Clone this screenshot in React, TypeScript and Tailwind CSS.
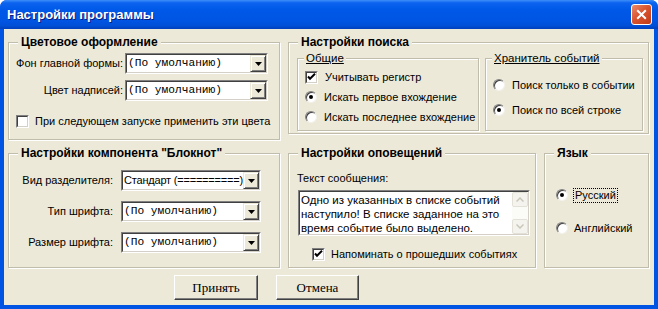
import React from 'react';

// ── small classic win32 controls ─────────────────────────

function GroupBox({
  title,
  className,
  sub = false,
  children,
}: {
  title: string;
  className: string;
  sub?: boolean;
  children?: React.ReactNode;
}) {
  return (
    <fieldset
      className={`border border-[#C0BDAD] shadow-[inset_1px_1px_0_#fff,1px_1px_0_#fff] ${className}`}
    >
      <legend
        className={
          sub
            ? 'ml-[6px] px-[2px] leading-[14px] text-[11.5px] underline bg-[#ECE9D8]'
            : 'ml-[9px] px-[3px] leading-[14px] text-[12px] font-bold bg-[#ECE9D8]'
        }
      >
        {title}
      </legend>
      {children}
    </fieldset>
  );
}

function DropArrow() {
  return (
    <div className="w-[16px] h-full shrink-0 flex items-center justify-center bg-[#ECE9D8] border border-t-[#ECE9D8] border-l-[#ECE9D8] border-r-[#404040] border-b-[#404040] shadow-[inset_1px_1px_0_#fff,inset_-1px_-1px_0_#808080]">
      <svg width="7" height="4" viewBox="0 0 7 4">
        <path d="M0 0h7L3.5 4z" fill="#000" />
      </svg>
    </div>
  );
}

function Combo({ value, mono = true, className }: { value: string; mono?: boolean; className: string }) {
  return (
    <div
      className={`h-[21px] border border-t-[#808080] border-l-[#808080] border-r-white border-b-white ${className}`}
    >
      <div className="h-full flex bg-white border border-t-[#404040] border-l-[#404040] border-r-[#D4D0C8] border-b-[#D4D0C8]">
        <span
          className={
            mono
              ? "flex-1 min-w-0 overflow-hidden pl-[1px] leading-[17px] whitespace-pre font-['Liberation_Mono',monospace] text-[11.2px]"
              : 'flex-1 min-w-0 overflow-hidden pl-[1px] leading-[17px] whitespace-pre text-[11px] tracking-[-0.2px]'
          }
        >
          {value}
        </span>
        <DropArrow />
      </div>
    </div>
  );
}

function CheckBox({ checked }: { checked: boolean }) {
  return (
    <div className="w-[13px] h-[13px] shrink-0 border border-t-[#808080] border-l-[#808080] border-r-white border-b-white">
      <div className="w-full h-full bg-white border border-t-[#404040] border-l-[#404040] border-r-[#D4D0C8] border-b-[#D4D0C8] flex items-center justify-center">
        {checked && (
          <svg width="9" height="9" viewBox="0 0 9 9">
            <path d="M1 3.5l2 2.2L8 0.8" stroke="#000" strokeWidth="2" fill="none" />
          </svg>
        )}
      </div>
    </div>
  );
}

function Radio({ checked }: { checked: boolean }) {
  return (
    <div className="w-[12px] h-[12px] shrink-0 rounded-full bg-white border border-t-[#808080] border-l-[#808080] border-r-[#F2F1EC] border-b-[#F2F1EC] shadow-[inset_1px_1px_0_#404040] flex items-center justify-center">
      {checked && <div className="w-[4px] h-[4px] rounded-full bg-black" />}
    </div>
  );
}

function Chevron({ up }: { up: boolean }) {
  return (
    <div className="h-[15px] flex items-center justify-center rounded-[2px] border border-[#E3E1D7] bg-[#F4F3EE]">
      <svg width="8" height="5" viewBox="0 0 8 5">
        <path d={up ? 'M0.5 4.5L4 1l3.5 3.5' : 'M0.5 0.5L4 4l3.5-3.5'} stroke="#C9C7BA" strokeWidth="1.5" fill="none" />
      </svg>
    </div>
  );
}

function Button({ label, className }: { label: string; className: string }) {
  return (
    <div
      className={`h-[25px] flex items-center justify-center bg-[#ECE9D8] border border-t-white border-l-white border-r-[#404040] border-b-[#404040] shadow-[inset_-1px_-1px_0_#808080] font-['Liberation_Serif',serif] text-[13px] ${className}`}
    >
      {label}
    </div>
  );
}

export default function App() {
  return (
    <div className="w-[658px] h-[309px] flex flex-col bg-[#0054E3] rounded-t-[7px] overflow-hidden whitespace-nowrap font-['Liberation_Sans',Arial,sans-serif] text-[11px] text-black">
      {/* ── Title bar ───────────────────────────── */}
      <div className="h-[29px] shrink-0 flex items-center justify-between pl-[7px] pr-[6px] bg-[linear-gradient(to_bottom,#3D8EF8_0%,#0B63EE_10%,#0058E8_35%,#0055E3_70%,#0050D8_88%,#0040BC_100%)]">
        <span className="text-white font-bold text-[13px] [text-shadow:1px_1px_0_#0A1C7A]">
          Настройки программы
        </span>
        <div className="w-[21px] h-[21px] rounded-[3px] border border-white bg-[linear-gradient(135deg,#EC8C6C_0%,#D9552F_45%,#C03A17_100%)] flex items-center justify-center">
          <svg width="11" height="11" viewBox="0 0 11 11">
            <path d="M1.2 1.2l8.6 8.6M9.8 1.2L1.2 9.8" stroke="#fff" strokeWidth="2" />
          </svg>
        </div>
      </div>

      {/* ── Client area ─────────────────────────── */}
      <div className="flex-1 mx-[4px] mb-[4px] bg-[#ECE9D8] flex flex-col pt-[6px] pl-[4px]">
        <div className="flex items-start gap-[8px]">
          <GroupBox title="Цветовое оформление" className="w-[272px] h-[105px]">
            <div className="grid grid-cols-[114px_143px] gap-x-[2px] gap-y-[6px] items-center mt-[4px]">
              <span className="text-right">Фон главной формы:</span>
              <Combo value="(По умолчанию)" className="w-[143px]" />
              <span className="text-right">Цвет надписей:</span>
              <Combo value="(По умолчанию)" className="w-[143px]" />
            </div>
            <div className="flex items-center gap-[6px] pl-[7px] mt-[12px]">
              <CheckBox checked={false} />
              <span>При следующем запуске применить эти цвета</span>
            </div>
          </GroupBox>

          <GroupBox title="Настройки поиска" className="w-[361px] h-[99px]">
            <div className="flex gap-[6px] pl-[8px] mt-[2px]">
              <GroupBox title="Общие" sub className="w-[182px] h-[80px]">
                <div className="flex flex-col pl-[7px] mt-[2px]">
                  <div className="h-[20px] flex items-center gap-[7px]">
                    <CheckBox checked />
                    <span>Учитывать регистр</span>
                  </div>
                  <div className="h-[20px] flex items-center gap-[7px]">
                    <Radio checked />
                    <span>Искать первое вхождение</span>
                  </div>
                  <div className="h-[20px] flex items-center gap-[7px]">
                    <Radio checked={false} />
                    <span>Искать последнее вхождение</span>
                  </div>
                </div>
              </GroupBox>
              <GroupBox title="Хранитель событий" sub className="w-[158px] h-[80px]">
                <div className="flex flex-col gap-[5px] pl-[7px] mt-[10px]">
                  <div className="h-[20px] flex items-center gap-[7px]">
                    <Radio checked={false} />
                    <span>Поиск только в событии</span>
                  </div>
                  <div className="h-[20px] flex items-center gap-[7px]">
                    <Radio checked />
                    <span>Поиск по всей строке</span>
                  </div>
                </div>
              </GroupBox>
            </div>
          </GroupBox>
        </div>

        <div className="flex items-start gap-[8px] mt-[6px]">
          <GroupBox title={'Настройки компонента "Блокнот"'} className="w-[272px] h-[122px]">
            <div className="grid grid-cols-[104px_140px] gap-x-[8px] gap-y-[10px] items-center mt-[10px]">
              <span className="text-right">Вид разделителя:</span>
              <Combo value="Стандарт (==========)" mono={false} className="w-[140px]" />
              <span className="text-right">Тип шрифта:</span>
              <Combo value="(По умолчанию)" className="w-[140px]" />
              <span className="text-right">Размер шрифта:</span>
              <Combo value="(По умолчанию)" className="w-[140px]" />
            </div>
          </GroupBox>

          <GroupBox title="Настройки оповещений" className="w-[248px] h-[122px]">
            <div className="flex flex-col pl-[8px] mt-[11px]">
              <span className="leading-[14px]">Текст сообщения:</span>
              <div className="mt-[5px] ml-[1px] w-[232px] h-[46px] flex border border-t-[#808080] border-l-[#808080] border-r-white border-b-white">
                <div className="flex-1 flex bg-white border border-t-[#404040] border-l-[#404040] border-r-[#D4D0C8] border-b-[#D4D0C8]">
                  <p className="flex-1 pl-[1px] pt-[1px] leading-[14px] text-[11.5px]">
                    Одно из указанных в списке событий
                    <br />
                    наступило! В списке заданное на это
                    <br />
                    время событие было выделено.
                  </p>
                  <div className="w-[16px] flex flex-col justify-between bg-[#FBFBF8]">
                    <Chevron up />
                    <Chevron up={false} />
                  </div>
                </div>
              </div>
              <div className="flex items-center gap-[6px] ml-[15px] mt-[10px]">
                <CheckBox checked />
                <span>Напоминать о прошедших событиях</span>
              </div>
            </div>
          </GroupBox>

          <GroupBox title="Язык" className="w-[105px] h-[122px]">
            <div className="flex flex-col gap-[13px] pl-[11px] mt-[25px]">
              <div className="h-[20px] flex items-center gap-[5px]">
                <Radio checked />
                <span className="px-[1px] leading-[13px] border border-dotted border-black">Русский</span>
              </div>
              <div className="h-[20px] flex items-center gap-[6px]">
                <Radio checked={false} />
                <span>Английский</span>
              </div>
            </div>
          </GroupBox>
        </div>

        <div className="flex gap-[18px] ml-[166px] mt-[7px]">
          <Button label="Принять" className="w-[84px]" />
          <Button label="Отмена" className="w-[83px]" />
        </div>
      </div>
    </div>
  );
}
